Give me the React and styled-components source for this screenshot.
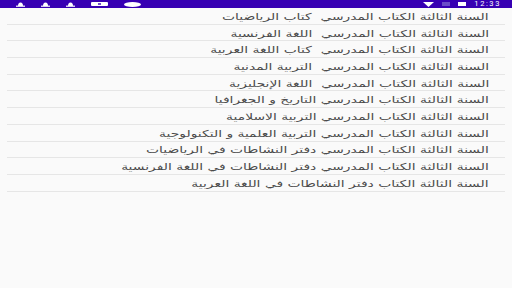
import styled, { createGlobalStyle } from "styled-components";

const GlobalStyle = createGlobalStyle`
  html, body {
    margin: 0;
    padding: 0;
    background: #fafafa;
    font-family: "DejaVu Sans", "Liberation Sans", sans-serif;
  }
`;

const books = [
  "السنة الثالثة الكتاب المدرسي  كتاب الرياضيات",
  "السنة الثالثة الكتاب المدرسي  اللغة الفرنسية",
  "السنة الثالثة الكتاب المدرسي  كتاب اللغة العربية",
  "السنة الثالثة الكتاب المدرسي  التربية المدنية",
  "السنة الثالثة الكتاب المدرسي  اللغة الإنجليزية",
  "السنة الثالثة الكتاب المدرسي التاريخ و الجغرافيا",
  "السنة الثالثة الكتاب المدرسي التربية الاسلامية",
  "السنة الثالثة الكتاب المدرسي التربية العلمية و التكنولوجية",
  "السنة الثالثة الكتاب المدرسي دفتر النشاطات في الرياضيات",
  "السنة الثالثة الكتاب المدرسي دفتر النشاطات في اللغة الفرنسية",
  "السنة الثالثة الكتاب دفتر النشاطات في اللغة العربية",
];

const Screen = styled.div`
  width: 512px;
  height: 288px;
  background: #fafafa;
  overflow: hidden;
`;

const StatusBar = styled.div`
  height: 8px;
  background: #3700b3;
  display: flex;
  align-items: center;
  justify-content: space-between;
  padding: 0 11px 0 16px;
`;

const IconGroup = styled.div`
  display: flex;
  align-items: center;
  gap: ${(p) => p.gap || 8}px;
`;

const Clock = styled.span`
  color: #fff;
  font-family: "Roboto", sans-serif;
  font-size: 7.5px;
  line-height: 8px;
  letter-spacing: 1.6px;
`;

const List = styled.ul`
  list-style: none;
  margin: 0 7px;
  padding: 0;
`;

const Row = styled.li`
  height: 16.7px;
  box-sizing: border-box;
  border-bottom: 1px solid #e6e6e6;
  display: flex;
  align-items: center;
  justify-content: flex-start;
  padding: 1px 16px 0 0;
  direction: rtl;
`;

const Label = styled.span`
  display: inline-block;
  font-size: 9.5px;
  word-spacing: 0;
  color: #4a4a4a;
  white-space: pre;
  transform: scaleX(1.46);
  transform-origin: right center;
`;

const Bell = () => (
  <svg width="9" height="5" viewBox="0 0 9 5">
    <path d="M2 4 Q2 0.5 4.5 0.5 Q7 0.5 7 4 Z" fill="#fff" />
    <rect x="0" y="3.6" width="9" height="1.2" fill="#fff" />
  </svg>
);

const StatusIcons = () => (
  <IconGroup gap={16}>
    <Bell />
    <Bell />
    <Bell />
    <svg width="17" height="4" viewBox="0 0 17 4">
      <rect width="17" height="4" rx="1" fill="#fff" />
      <rect x="7" y="1.3" width="3" height="1.4" fill="#3700b3" />
    </svg>
    <svg width="17" height="5" viewBox="0 0 17 5">
      <ellipse cx="8.5" cy="2.5" rx="8.5" ry="2.5" fill="#fff" />
    </svg>
  </IconGroup>
);

const SystemIcons = () => (
  <IconGroup gap={8}>
    <svg width="11" height="5" viewBox="0 0 11 5">
      <path d="M0 0 H11 L5.5 5 Z" fill="#fff" />
    </svg>
    <svg width="8" height="4" viewBox="0 0 8 4">
      <rect width="8" height="4" fill="#6a4bc8" />
    </svg>
    <svg width="8" height="4" viewBox="0 0 8 4">
      <rect width="8" height="4" fill="#fff" />
    </svg>
    <Clock>12:33</Clock>
  </IconGroup>
);

export default function App() {
  return (
    <Screen>
      <GlobalStyle />
      <StatusBar>
        <StatusIcons />
        <SystemIcons />
      </StatusBar>
      <List>
        {books.map((b) => (
          <Row key={b}>
            <Label>{b}</Label>
          </Row>
        ))}
      </List>
    </Screen>
  );
}
